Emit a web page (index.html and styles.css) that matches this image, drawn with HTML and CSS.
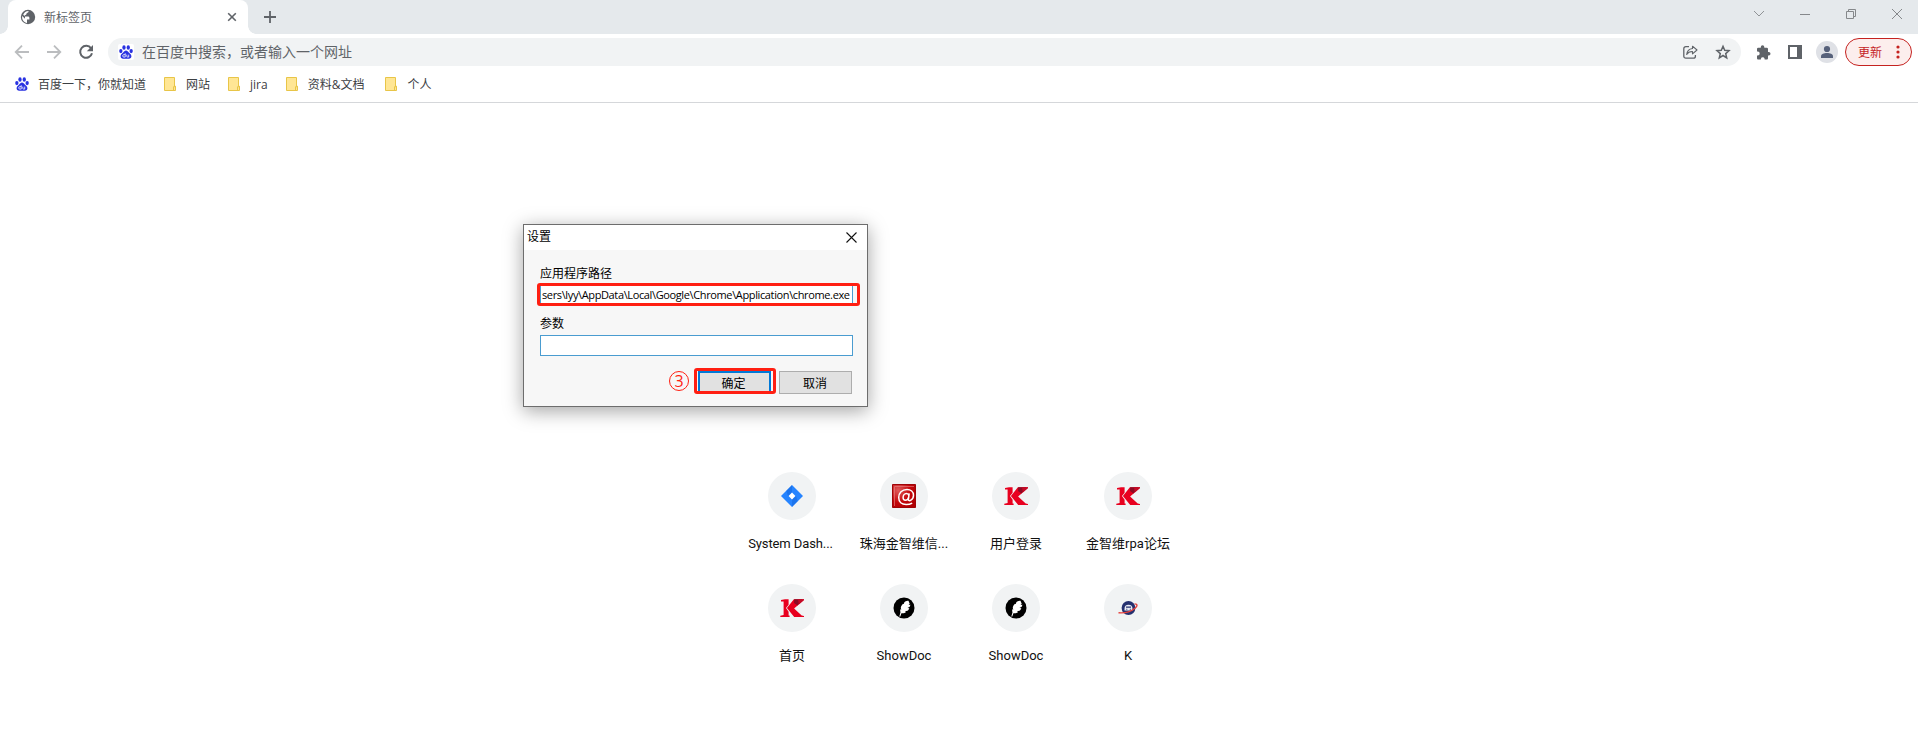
FILE: index.html
```html
<!DOCTYPE html>
<html lang="zh-CN">
<head>
<meta charset="utf-8">
<title>新标签页</title>
<link rel="stylesheet" href="styles.css">
</head>
<body>
<svg class="defs" width="0" height="0">
  <symbol id="paw" viewBox="0 0 16 16">
    <g fill="#2932e1">
      <ellipse cx="5.700" cy="2.800" rx="1.900" ry="2.600"/>
      <ellipse cx="10.600" cy="2.800" rx="1.900" ry="2.600"/>
      <ellipse cx="2.100" cy="6.900" rx="1.900" ry="2.400"/>
      <ellipse cx="13.900" cy="6.900" rx="1.900" ry="2.400"/>
      <path d="M8 6.400c1.500 0 2.300 1.200 3.200 2.300 1 1.200 3 2 3 4.200 0 1.700-1.200 2.800-2.900 2.800H4.700C3 15.700 1.800 14.600 1.800 12.900c0-2.200 2-3 3-4.200C5.700 7.600 6.500 6.400 8 6.400z"/>
    </g>
    <path d="M7.100 9.400v4.400H5.600a1.300 1.300 0 0 1 0-2.800h1.500M8.900 11v1.900c0 .6.3.9.9.9h1.300V11" fill="none" stroke="#fff" stroke-width=".9"/>
  </symbol>
  <symbol id="folder" viewBox="0 0 12 14">
    <path d="M.5.500h10v8.700h1v4.300H.5z" fill="#ffe694" stroke="#e8c548"/>
    <path d="M9.500 13.500v-3.800h2" fill="none" stroke="#e8c548"/>
  </symbol>
  <symbol id="klogo" viewBox="0 0 24 18">
    <path d="M1 1l4-.8h3.600v5.600L6 9l2.600 3.800v3.700h1V18H.3v-1.200l3.300-.8V2.500H1z" fill="#e8001f"/>
    <path d="M13.900.2H24v.8l-9.900 8.600 7.600 6.900 2.300.4V18h-9.800L6.900 9z" fill="#e8001f"/>
    <path d="M14.200.200H22.500l-5 6.300-3.500-2.600z" fill="#8c0a24"/>
    <path d="M18 .2H24v.8l-5.200 4.400z" fill="#c40a25"/>
  </symbol>
  <symbol id="feather" viewBox="0 0 22 22">
    <circle cx="11" cy="11" r="10.500" fill="#000"/>
    <path d="M15.500 3.800c-1.800-.4-3.200.5-4.300 1.700l-.3 1.600-.9-.4c-1.500 1.500-2.300 3-2.200 4.500l.6 1.300-1-.2c-.4 1-.2 2 .1 3l-1.200 4.200h1l1.100-3.300c1.800.3 3.500 0 4.700-1.200l-1.200-.7 2.600-.6c1-.8 1.500-1.500 1.800-2.500l-1.800-.2 2.200-1.200.8-2-1.900.3 1.100-1.400z" fill="#fff"/>
  </symbol>
</svg>

<header class="tabstrip">
  <div class="tab">
    <svg class="globe" width="16" height="16" viewBox="0 0 16 16">
      <circle cx="8" cy="8" r="7.200" fill="#5f6368"/>
      <path d="M8.600 2.100c0 1.300-.7 1.800-1.900 1.900 0 1.500-.7 2.100-2 2.200v1.400h3.200c1 0 1.500.6 1.500 1.500v1.300H7v3.500C4.200 13.600 2.100 11.200 2.100 8c0-.4 0-.7.1-1.100L5 9.700V7.600L3.200 5.800C4.100 3.600 6 2.200 8.600 2.100z" fill="#fff"/>
      <path d="M11.300 3.200c1.600 1.100 2.600 2.800 2.600 4.800 0 1.400-.4 2.400-1.100 3.400-.3-.8-.9-1.200-1.700-1.200V8.400c0-.6-.4-.9-.9-1-.9-.2-1-1-.4-1.500.8-.6 1.600-1.100 1.500-2.700z" fill="#5f6368"/>
    </svg>
    <span class="tab-title">新标签页</span>
    <svg width="10" height="10" viewBox="0 0 10 10"><path d="M1.200 1.200l7.600 7.600M8.800 1.200L1.200 8.800" stroke="#5f6368" stroke-width="1.600"/></svg>
  </div>
  <svg class="newtab" width="12" height="12" viewBox="0 0 12 12"><path d="M6 0v12M0 6h12" stroke="#5f6368" stroke-width="1.800"/></svg>
  <div class="controls">
    <svg width="10" height="10" viewBox="0 0 10 10"><path d="M0 2l5 5 5-5" fill="none" stroke="#909396"/></svg>
    <svg width="10" height="10" viewBox="0 0 10 10"><path d="M0 5.500h10" stroke="#85888b"/></svg>
    <svg width="10" height="10" viewBox="0 0 10 10"><path d="M.5 2.500h7v7h-7zM2.500 2.500v-2h7v7h-2" fill="none" stroke="#85888b"/></svg>
    <svg width="10" height="10" viewBox="0 0 10 10"><path d="M0 0l10 10M10 0L0 10" stroke="#85888b"/></svg>
  </div>
</header>

<nav class="toolbar">
  <svg class="nav" width="16" height="16" viewBox="0 0 16 16"><path d="M15 8H2M8 1.700L1.700 8 8 14.300" fill="none" stroke="#bbbdbf" stroke-width="1.800"/></svg>
  <svg class="nav" width="16" height="16" viewBox="0 0 16 16"><path d="M1 8h13M8 1.700L14.300 8 8 14.300" fill="none" stroke="#bbbdbf" stroke-width="1.800"/></svg>
  <svg class="nav" width="16" height="16" viewBox="0 0 16 16"><path d="M13.100 4.300A6 6 0 1 0 14 9.300" fill="none" stroke="#5f6368" stroke-width="2"/><path d="M15 1v6.200H8.800z" fill="#5f6368"/></svg>
  <div class="omnibox">
    <span class="engine"><svg width="14" height="14"><use href="#paw"/></svg></span>
    <span class="hint">在百度中搜索，或者输入一个网址</span>
    <svg width="15" height="14" viewBox="0 0 15 14"><path d="M6 1.700H2.800A2 2 0 0 0 .8 3.700v7.500a2 2 0 0 0 2 2h7.600a2 2 0 0 0 2-2V10" fill="none" stroke="#5f6368" stroke-width="1.300"/><path d="M9.500 1.200L14 5 9.500 8.800V6.500C6.800 6.400 5 7.300 3.700 9.500 4 6.200 6 3.900 9.500 3.500z" fill="none" stroke="#5f6368" stroke-width="1.100" stroke-linejoin="round"/></svg>
    <svg class="star" width="16" height="16" viewBox="0 0 16 16"><path d="M8 2.300l1.700 4 4.300.4-3.300 2.900 1 4.200L8 11.500l-3.700 2.300 1-4.200L2 6.700l4.300-.4z" fill="none" stroke="#5f6368" stroke-width="1.500"/></svg>
  </div>
  <svg class="puzzle" width="15" height="15" viewBox="0 0 15 15"><path d="M12.800 7H12V4a1.300 1.300 0 0 0-1.300-1.300H8.300V2a1.700 1.700 0 0 0-3.500 0v.7H2.300A1.300 1.300 0 0 0 1 4v2.600h.8a1.900 1.900 0 0 1 0 3.800H1v2.800c0 .7.6 1.300 1.300 1.300h2.600v-.8a1.900 1.900 0 0 1 3.700 0v.8h2.100c.7 0 1.300-.6 1.300-1.300v-2.800h.8a1.700 1.700 0 0 0 0-3.400z" fill="#5f6368"/></svg>
  <span class="panel"></span>
  <svg class="avatar" width="22" height="22" viewBox="0 0 22 22"><circle cx="11" cy="11" r="11" fill="#dfe1e6"/><circle cx="11" cy="8" r="3.100" fill="#56617a"/><path d="M5 17v-1.700c0-2.200 3-3.300 6-3.300s6 1.100 6 3.300V17z" fill="#56617a"/></svg>
  <div class="update"><span>更新</span>
    <svg width="4" height="14" viewBox="0 0 4 14" fill="#c5221f"><circle cx="2" cy="2" r="1.600"/><circle cx="2" cy="7" r="1.600"/><circle cx="2" cy="12" r="1.600"/></svg>
  </div>
</nav>

<div class="bookmarks">
  <a class="mark baidu"><svg width="14" height="14"><use href="#paw"/></svg><span>百度一下，你就知道</span></a>
  <a class="mark"><svg width="12" height="14"><use href="#folder"/></svg><span>网站</span></a>
  <a class="mark"><svg width="12" height="14"><use href="#folder"/></svg><span>jira</span></a>
  <a class="mark docs"><svg width="12" height="14"><use href="#folder"/></svg><span>资料&amp;文档</span></a>
  <a class="mark"><svg width="12" height="14"><use href="#folder"/></svg><span>个人</span></a>
</div>

<main class="tiles">
  <a class="tile"><span class="disc"><svg width="22" height="22" viewBox="0 0 22 22"><path d="M11 0l11 11-11 11L0 11z" fill="#2684ff"/><path d="M11 0v7.600L7 11 5.300 5.700zM11 22v-7.600l4-3.400 1.700 5.300z" fill="#1264db" opacity=".5"/><path d="M11 7.600l3.400 3.400-3.400 3.400L7.600 11z" fill="#fff"/></svg></span><span class="name dash">System Dash...</span></a>
  <a class="tile"><span class="disc"><svg width="24" height="24" viewBox="0 0 24 24"><defs><radialGradient id="red" cx=".25" cy=".25" r=".85"><stop offset="0" stop-color="#df5a5a"/><stop offset=".6" stop-color="#c5080c"/><stop offset="1" stop-color="#b00004"/></radialGradient></defs><path d="M.5.500h23v23H.5z" fill="url(#red)" stroke="#9e0508"/><path d="M2.500 22V2.500H22" fill="none" stroke="#e58b8b" stroke-width=".6"/><path d="M17.200 9.300l-.8 6.200c-.2 1.200 1.300 1.600 2.500.7 1.800-1.200 2.600-3 2.600-5 0-3.600-2.700-5.800-6.500-5.800-5 0-8.300 3.500-8.300 8.200 0 4.400 3 7 7.500 7 2.300 0 4.300-.5 6-1.500M16.800 11.500c-.3-1.400-1.200-2-2.300-2-2 0-3.400 1.900-3.400 4.100 0 1.600.8 2.700 2.200 2.700 1.700 0 3-1.500 3.300-3.300" fill="none" stroke="#fff" stroke-width="1.500"/></svg></span><span class="name">珠海金智维信...</span></a>
  <a class="tile"><span class="disc"><svg width="24" height="18"><use href="#klogo"/></svg></span><span class="name">用户登录</span></a>
  <a class="tile"><span class="disc"><svg width="24" height="18"><use href="#klogo"/></svg></span><span class="name">金智维rpa论坛</span></a>
  <a class="tile"><span class="disc"><svg width="24" height="18"><use href="#klogo"/></svg></span><span class="name">首页</span></a>
  <a class="tile"><span class="disc"><svg width="22" height="22"><use href="#feather"/></svg></span><span class="name">ShowDoc</span></a>
  <a class="tile"><span class="disc"><svg width="22" height="22"><use href="#feather"/></svg></span><span class="name">ShowDoc</span></a>
  <a class="tile"><span class="disc"><svg width="20" height="14" viewBox="0 0 20 14"><circle cx="10.500" cy="7" r="6.900" fill="#25306f"/><path d="M6.500 8c0-3 1.400-4.300 4-4.300s4 1.300 4 4.300v1.500h-8z" fill="#e9ebf4"/><path d="M8 5.600h5v1.200H8zM8.300 7.800h1v1h-1zM11.800 7.800h1v1h-1z" fill="#25306f"/><path d="M.5 11.800C6 12.300 13 10.400 17 7.200c2.600-2.100 2.900-4.300-.5-4.300" fill="none" stroke="#e4413d" stroke-width="1.400"/></svg></span><span class="name">K</span></a>
</main>

<section class="dialog">
  <div class="titlebar"><span>设置</span><svg width="11" height="11" viewBox="0 0 11 11"><path d="M.5.500l10 10M10.500.500l-10 10" stroke="#111" stroke-width="1.100"/></svg></div>
  <div class="form">
    <label class="label">应用程序路径</label>
    <div class="field path">sers\lyy\AppData\Local\Google\Chrome\Application\chrome.exe</div>
    <label class="label second">参数</label>
    <div class="field"></div>
    <div class="actions">
      <span class="step">3</span>
      <button class="btn ok">确定</button>
      <button class="btn">取消</button>
    </div>
  </div>
  <i class="mark-box mark-path"></i>
  <i class="mark-box mark-ok"></i>
</section>
</body>
</html>
```
FILE: styles.css
```css
* { box-sizing: border-box; }
body {
  margin: 0;
  height: 737px;
  overflow: hidden;
  background: #fff;
  font: 12px/16px "Open Sans", "Noto Sans CJK SC", sans-serif;
  color: #3c4043;
}
svg { display: block; flex: none; }
.defs { position: absolute; }

.tabstrip { display: flex; height: 34px; background: #e5e9ec; padding-left: 8px; }
.tab {
  position: relative;
  display: flex;
  align-items: center;
  width: 240px;
  padding: 0 11px 0 12px;
  background: #fff;
  border-radius: 8px 8px 0 0;
}
.tab::before, .tab::after {
  content: "";
  position: absolute;
  bottom: 0;
  width: 8px;
  height: 8px;
}
.tab::before { left: -8px; background: radial-gradient(circle at 0 0, transparent 7.5px, #fff 8px); }
.tab::after { right: -8px; background: radial-gradient(circle at 100% 0, transparent 7.5px, #fff 8px); }
.tab-title { flex: 1; margin-left: 8px; padding-top: 1px; color: #5f6368; }
.newtab { margin: 11px 0 0 16px; }
.controls { display: flex; gap: 36px; margin: 9px 16px 0 auto; }

.toolbar { display: flex; align-items: center; height: 36px; padding: 0 6px 0 14px; }
.nav { margin-right: 16px; }
.nav + .nav + .nav { margin-right: 14px; }
.omnibox {
  flex: 1;
  display: flex;
  align-items: center;
  height: 28px;
  padding: 0 10px;
  border-radius: 14px;
  background: #f1f3f4;
}
.engine { display: grid; place-items: center; width: 16px; height: 16px; background: #fff; border-radius: 2px; }
.hint { flex: 1; margin-left: 8px; font-size: 14px; color: #5f6368; }
.star { margin-left: 17px; }
.puzzle { margin-left: 15px; }
.panel { width: 14px; height: 14px; margin-left: 17px; border: 2px solid #5f6368; border-right-width: 5px; }
.avatar { margin-left: 14px; }
.update {
  display: flex;
  align-items: center;
  justify-content: space-between;
  width: 67px;
  height: 28px;
  margin-left: 7px;
  padding: 0 11px 0 12px;
  border: 1px solid #c5221f;
  border-radius: 14px;
  background: #fceeed;
  color: #c5221f;
}
.update span { padding-top: 1px; }

.bookmarks { display: flex; height: 33px; gap: 18px; padding: 0 15px 4px; border-bottom: 1px solid #d5d7da; }
.mark { display: flex; align-items: center; gap: 10px; white-space: nowrap; }
.mark span { padding-top: 2px; }
.baidu { gap: 9px; }
.docs { margin-right: 3px; }

.tiles {
  display: grid;
  grid-template-columns: repeat(4, 112px);
  grid-auto-rows: 112px;
  width: 448px;
  margin: 369px 0 0 736px;
}
.tile { display: flex; flex-direction: column; align-items: center; }
.disc { display: grid; place-items: center; width: 48px; height: 48px; border-radius: 50%; background: #f1f3f4; }
.name { margin-top: 16px; font: 13px/16px Roboto, "Noto Sans CJK SC", sans-serif; color: #111; white-space: nowrap; }
.dash { margin-right: 3px; letter-spacing: -.1px; }

/* Settings window floating above the page */
.dialog {
  position: absolute;
  left: 523px;
  top: 224px;
  width: 345px;
  height: 183px;
  border: 1px solid #6d6d6d;
  background: #f7f7f7;
  box-shadow: 0 4px 18px rgba(0, 0, 0, .36);
  color: #000;
}
.titlebar { display: flex; align-items: center; justify-content: space-between; height: 25px; padding: 0 10px 0 3px; background: #fff; }
.titlebar span { padding-bottom: 1px; }
.form { padding: 16px 14px 0 16px; }
.label { display: block; margin-bottom: 3px; line-height: 16px; }
.field { height: 21px; border: 1px solid #4a9cd0; background: #fff; }
.path { padding-left: 1px; line-height: 17px; font-size: 11px; letter-spacing: -.37px; white-space: nowrap; }
.second { margin-top: 10px; }
.actions { display: flex; justify-content: flex-end; gap: 8px; margin: 15px 1px 0 0; }
.btn {
  width: 73px;
  height: 23px;
  padding: 2px 1px 0 0;
  border: 1px solid #adadad;
  background: #e1e1e1;
  font: inherit;
  line-height: 16px;
  color: #000;
}
.ok { padding-right: 2px; border: 2px solid #0078d7; }
.step {
  width: 20px;
  height: 20px;
  margin-right: 1px;
  border: 1px solid #ff1f12;
  border-radius: 50%;
  text-align: center;
  font-size: 16px;
  line-height: 18px;
  color: #ff1f12;
}
.mark-box { position: absolute; border: 3px solid #ff1f12; border-radius: 3px; }
.mark-path { left: 13px; top: 58px; width: 323px; height: 23px; }
.mark-ok { left: 170px; top: 143px; width: 82px; height: 26px; }
```
